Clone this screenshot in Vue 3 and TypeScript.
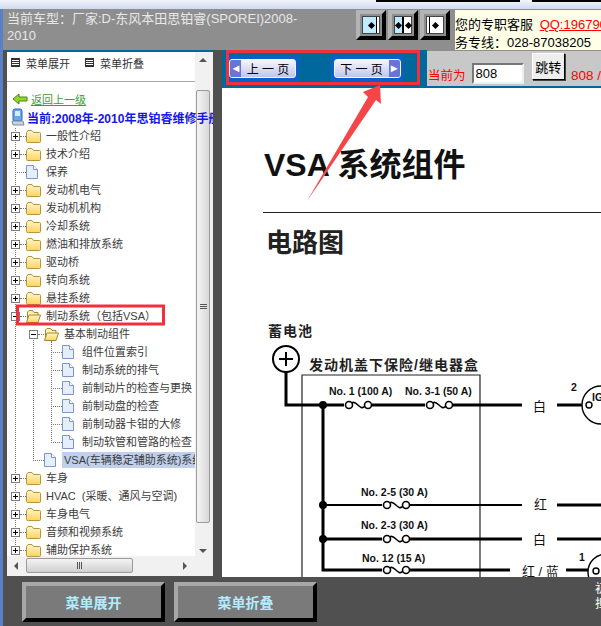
<template>
  <div class="app">
    <div class="titlebar">
      <span class="tb-line tb1"></span>
      <span class="tb-line tb2"></span>
    </div>
    <div class="main">
      <div class="header">
        <div class="car">当前车型：厂家:D-东风本田思铂睿(SPOREI)2008-<br />2010</div>
        <div class="split-btns">
          <button class="bevel"><span class="ico left-open"><i class="dia"></i></span></button>
          <button class="bevel"><span class="ico both"><i class="dia"></i><i class="dia"></i></span></button>
          <button class="bevel"><span class="ico right-open"><i class="dia"></i></span></button>
        </div>
        <div class="service">
          <div>您的专职客服 <a class="qq">QQ:196790</a></div>
          <div>务专线：028-87038205</div>
        </div>
      </div>

      <div class="body">
        <aside class="side">
          <div class="side-inner">
            <div class="tree-scroll">
              <div class="side-tools">
                <span class="tool"><i class="doc-ico"></i>菜单展开</span>
                <span class="tool"><i class="doc-ico"></i>菜单折叠</span>
              </div>
              <a class="back">
                <svg width="16" height="12" viewBox="0 0 16 12"><path d="M1 6 7 1v3h8v4H7v3z" fill="#9ad42a" stroke="#3f8a10"/></svg>
                <span>返回上一级</span>
              </a>
              <div class="current">
                <svg width="14" height="18" viewBox="0 0 14 18"><rect x="2" y="1" width="9" height="12" rx="2" fill="#6aa8ee" stroke="#2d62b8"/><rect x="4" y="3" width="5" height="5" fill="#d8ecff"/><path d="M1 13h11l1 4H2z" fill="#c8d4e4" stroke="#7b8aa0"/></svg>
                <span>当前:2008年-2010年思铂睿维修手册</span>
              </div>
              <div class="tree">
                <span v-for="g in guides" :key="g.left" class="guide" :style="{ left: g.left + 'px', top: g.top + 'px', height: g.height + 'px' }"></span>
                <div v-for="row in rows" :key="row.text" class="row" :style="{ paddingLeft: row.level * 18 + 6 + 'px' }">
                  <span class="toggle" :class="{ none: row.kind === 'leaf' }">
                    <template v-if="row.kind !== 'leaf'">
                      <i class="h"></i><i v-if="row.kind === 'closed'" class="v"></i>
                    </template>
                  </span>
                  <span class="dash"></span>
                  <svg v-if="row.kind === 'closed'" class="folder" width="15" height="14" viewBox="0 0 15 14">
                    <path d="M.5 3.5 2 1.5h4L7.5 3.5h6a1 1 0 0 1 1 1v8a1 1 0 0 1-1 1h-12a1 1 0 0 1-1-1z" fill="url(#fold)" stroke="#b8953a"/>
                  </svg>
                  <svg v-else-if="row.kind === 'open'" class="folder" width="15" height="14" viewBox="0 0 15 14">
                    <path d="M1.5 12V3L3 1.5h3.5L8 3.5h4V6" fill="#fff2b8" stroke="#a8852e"/>
                    <path d="M.5 13.5 3 6h11.5L12 13.5z" fill="url(#fold)" stroke="#a8852e"/>
                  </svg>
                  <svg v-else class="page" width="12" height="14" viewBox="0 0 12 14">
                    <path d="M.5.5h7l4 4v9H.5z" fill="#e4eefc" stroke="#7d96c8"/>
                    <path d="M7.5.5v4h4" fill="#fff" stroke="#7d96c8"/>
                  </svg>
                  <span class="label" :class="{ selected: row.selected }">{{ row.text }}</span>
                </div>
              </div>
              <svg width="0" height="0" class="defs">
                <linearGradient id="fold" x1="0" y1="0" x2="0" y2="1">
                  <stop offset="0" stop-color="#fff6cc" />
                  <stop offset="1" stop-color="#ffd55c" />
                </linearGradient>
              </svg>
            </div>
            <div class="vbar">
              <span class="arrow-up"></span>
              <span class="thumb"><i></i><i></i><i></i></span>
              <span class="arrow-down"></span>
            </div>
          </div>
          <div class="hbar">
            <span class="arrow-left"></span>
            <span class="hthumb"><i></i><i></i><i></i></span>
            <span class="arrow-right"></span>
          </div>
        </aside>

        <section class="content">
          <div class="pager">
            <div class="pager-nav">
              <div class="pg-box">
                <span class="pg prev"><b>◂</b><em>上 一 页</em></span>
              </div>
              <div class="pg-box next-box">
                <span class="pg next"><em>下 一 页</em><b>▸</b></span>
              </div>
            </div>
            <div class="jump">
              <span class="now">当前为</span>
              <input class="page-input" value="808" />
              <button class="go">跳转</button>
              <span class="total">808 /</span>
            </div>
          </div>
          <div class="doc">
            <h1>VSA 系统组件</h1>
            <hr />
            <h2>电路图</h2>
            <svg class="diagram" width="379" height="256" viewBox="222 321 379 256">
              <text x="268" y="336" class="cn-b">蓄电池</text>
              <circle cx="286" cy="359" r="13" fill="#fff" stroke="#000" stroke-width="2" />
              <path d="M279 359h14M286 352v14" stroke="#000" stroke-width="2" />
              <text x="309" y="370" class="cn-b">发动机盖下保险/继电器盒</text>
              <path d="M302 577V375h178v202" fill="none" stroke="#222" stroke-width="1.2" />

              <path d="M286 372v33h236" fill="none" stroke="#000" stroke-width="3" />
              <path d="M323 405v165h187" fill="none" stroke="#000" stroke-width="3" />
              <path d="M323 505h199" stroke="#000" stroke-width="2" />
              <path d="M323 539h199" stroke="#000" stroke-width="3" />
              <path d="M557 405h44M557 505h44M557 539h44M566 570h35" stroke="#000" stroke-width="3" />

              <circle cx="323" cy="405" r="4" />
              <circle cx="323" cy="505" r="4" />
              <circle cx="323" cy="539" r="4" />

              <g v-for="f in fuses" :key="f.x + '-' + f.y" :transform="`translate(${f.x} ${f.y})`">
                <rect x="-1" y="-4" width="28" height="8" fill="#fff" />
                <circle cx="4" cy="0" r="3.5" fill="#fff" stroke="#000" stroke-width="1.6" />
                <circle cx="23" cy="0" r="3.5" fill="#fff" stroke="#000" stroke-width="1.6" />
                <path d="M7 -2C11 -6 15 7 20 1" fill="none" stroke="#000" stroke-width="1.6" />
              </g>

              <text x="329" y="395" class="lab">No. 1 (100 A)</text>
              <text x="405" y="395" class="lab">No. 3-1 (50 A)</text>
              <text x="361" y="496" class="lab">No. 2-5 (30 A)</text>
              <text x="361" y="529" class="lab">No. 2-3 (30 A)</text>
              <text x="362" y="562" class="lab">No. 12 (15 A)</text>

              <text x="533" y="411" class="wire">白</text>
              <text x="534" y="509" class="wire">红</text>
              <text x="533" y="544" class="wire">白</text>
              <text x="522" y="576" class="wire">红 / 蓝</text>

              <text x="571" y="391" class="lab">2</text>
              <text x="579" y="561" class="lab">1</text>
              <circle cx="601" cy="405" r="19" fill="#fff" stroke="#000" stroke-width="1.4" />
              <text x="592" y="401" class="lab">IG</text>
              <circle cx="589" cy="405" r="3" fill="#fff" stroke="#000" stroke-width="1.4" />
              <circle cx="606" cy="572" r="18" fill="#fff" stroke="#000" stroke-width="1.4" />
              <circle cx="596" cy="571" r="3" fill="#fff" stroke="#000" stroke-width="1.4" />
            </svg>
          </div>
        </section>
      </div>

      <div class="footer">
        <button class="foot-btn">菜单展开</button>
        <button class="foot-btn">菜单折叠</button>
        <div class="foot-note">初<br />担</div>
      </div>
    </div>

    <svg class="annot" width="601" height="626" viewBox="0 0 601 626">
      <rect x="227.5" y="51.5" width="191" height="32" fill="none" stroke="#f2303c" stroke-width="3" />
      <rect x="17.5" y="306" width="146" height="18" fill="none" stroke="#f2303c" stroke-width="3" />
      <path d="M380 85 363 92 368 97 307 201 376 100 381 104z" fill="#f64548" />
    </svg>
  </div>
</template>

<script setup lang="ts">
type Row = { text: string; level: number; kind: 'closed' | 'open' | 'leaf'; selected?: boolean }

const rows: Row[] = [
  { text: '一般性介绍', level: 0, kind: 'closed' },
  { text: '技术介绍', level: 0, kind: 'closed' },
  { text: '保养', level: 0, kind: 'leaf' },
  { text: '发动机电气', level: 0, kind: 'closed' },
  { text: '发动机机构', level: 0, kind: 'closed' },
  { text: '冷却系统', level: 0, kind: 'closed' },
  { text: '燃油和排放系统', level: 0, kind: 'closed' },
  { text: '驱动桥', level: 0, kind: 'closed' },
  { text: '转向系统', level: 0, kind: 'closed' },
  { text: '悬挂系统', level: 0, kind: 'closed' },
  { text: '制动系统（包括VSA）', level: 0, kind: 'open' },
  { text: '基本制动组件', level: 1, kind: 'open' },
  { text: '组件位置索引', level: 2, kind: 'leaf' },
  { text: '制动系统的排气', level: 2, kind: 'leaf' },
  { text: '前制动片的检查与更换', level: 2, kind: 'leaf' },
  { text: '前制动盘的检查', level: 2, kind: 'leaf' },
  { text: '前制动器卡钳的大修', level: 2, kind: 'leaf' },
  { text: '制动软管和管路的检查', level: 2, kind: 'leaf' },
  { text: 'VSA(车辆稳定辅助系统)系统组件', level: 1, kind: 'leaf', selected: true },
  { text: '车身', level: 0, kind: 'closed' },
  { text: 'HVAC\u00a0\u00a0(采暖、通风与空调)', level: 0, kind: 'closed' },
  { text: '车身电气', level: 0, kind: 'closed' },
  { text: '音频和视频系统', level: 0, kind: 'closed' },
  { text: '辅助保护系统', level: 0, kind: 'closed' },
]

// 树的竖向虚线，top 相对 .tree
const guides = [
  { left: 10, top: 1, height: 423 },
  { left: 28, top: 208, height: 126 },
  { left: 46, top: 214, height: 102 },
]

const fuses = [
  { x: 345, y: 405 },
  { x: 426, y: 405 },
  { x: 383, y: 505 },
  { x: 383, y: 539 },
  { x: 383, y: 570 },
]
</script>

<style>
html,
body {
  margin: 0;
  background: #505050;
}
</style>

<style scoped>
.app {
  position: relative;
  width: 601px;
  height: 626px;
  overflow: hidden;
  display: flex;
  flex-direction: column;
  font-family: "Liberation Sans", "Noto Sans CJK SC", sans-serif;
  font-size: 12px;
  background: #505050;
}

.titlebar {
  position: relative;
  height: 9px;
  background: linear-gradient(#f2f5fb, #cfdaf0);
  flex: none;
}
.tb-line {
  position: absolute;
  top: 0;
  height: 2px;
  background: #000;
}
.tb1 {
  left: 376px;
  width: 144px;
}
.tb2 {
  left: 532px;
  width: 69px;
}

.main {
  flex: 1;
  min-height: 0;
  display: flex;
  flex-direction: column;
  border-left: 3px solid #5b7fc4;
}

.header {
  height: 41px;
  flex: none;
  display: flex;
  background: #8e8e8e;
  box-sizing: border-box;
  overflow: hidden;
}
.car {
  width: 304px;
  margin-left: 4px;
  padding-top: 1px;
  color: #e8e8e8;
  font-size: 13px;
  line-height: 17px;
  white-space: nowrap;
}
.split-btns {
  display: flex;
  gap: 2px;
  margin-left: 45px;
  padding-top: 1px;
}
.bevel {
  width: 30px;
  height: 30px;
  padding: 0;
  box-sizing: border-box;
  background: #8e8e8e;
  border: 4px solid;
  border-color: #b4b4b4 #000 #000 #b4b4b4;
  display: flex;
  align-items: center;
  justify-content: center;
}
.ico {
  display: flex;
  align-items: center;
  justify-content: center;
  gap: 5px;
  width: 18px;
  height: 18px;
  border: 1px solid #444;
  box-sizing: border-box;
}
.left-open {
  background: linear-gradient(90deg, #bfeaff 80%, #000 80%, #000 88%, #fff 88%);
}
.both {
  background: linear-gradient(90deg, #bfeaff 46%, #000 46%, #000 54%, #fff 54%);
}
.right-open {
  background: linear-gradient(90deg, #fff 12%, #000 12%, #000 20%, #fff 20%);
}
.dia {
  width: 5px;
  height: 5px;
  background: #000;
  transform: rotate(45deg);
  flex: none;
}
.service {
  flex: 1;
  margin-left: 5px;
  margin-top: 1px;
  padding-top: 6px;
  background: #ffffe8;
  font-size: 13px;
  line-height: 18px;
  color: #000;
  white-space: nowrap;
  overflow: hidden;
}
.qq {
  color: #f00;
  text-decoration: underline;
  margin-left: 3px;
}

.body {
  flex: 1;
  min-height: 0;
  display: flex;
}

.side {
  position: relative;
  width: 206px;
  margin-left: 4px;
  margin-right: 9px;
  margin-bottom: 1px;
  flex: none;
  display: flex;
  flex-direction: column;
  background: #f5f5f5;
  border-top: 2px solid #00689c;
  box-sizing: border-box;
}
.side-inner {
  flex: 1;
  min-height: 0;
  display: flex;
}
.tree-scroll {
  width: 188px;
  background: #fff;
  flex: none;
  position: relative;
  z-index: 1;
}
.defs {
  position: absolute;
}
.side-tools {
  height: 30px;
  padding-bottom: 8px;
  box-sizing: border-box;
  display: flex;
  gap: 11px;
  align-items: center;
  font-size: 11px;
  color: #333;
  border-bottom: 1px solid #a8a8a8;
}
.tool {
  display: flex;
  align-items: center;
  white-space: nowrap;
  padding-left: 4px;
}
.doc-ico {
  width: 7px;
  height: 7px;
  border: 1px solid #333;
  margin-right: 6px;
  background: repeating-linear-gradient(#333 0 1px, #fff 1px 2px);
}
.back {
  display: flex;
  align-items: center;
  height: 18px;
  margin-top: 8px;
  padding-left: 5px;
  gap: 3px;
  font-size: 11px;
  color: #3aa030;
  text-decoration: underline;
  white-space: nowrap;
}
.back svg,
.current svg {
  flex: none;
}
.current {
  display: flex;
  align-items: center;
  width: 202px;
  height: 18px;
  margin-left: 4px;
  gap: 2px;
  color: #1414ee;
  font-weight: bold;
  white-space: nowrap;
  overflow: hidden;
}
.tree {
  position: relative;
  width: 190px;
  margin-top: 1px;
  margin-left: -2px;
  font-size: 11px;
  overflow: hidden;
}
.guide {
  position: absolute;
  width: 0;
  border-left: 1px dotted #777;
}
.row {
  position: relative;
  height: 18px;
  display: flex;
  align-items: center;
  color: #3c3c3c;
  white-space: nowrap;
}
.toggle {
  position: relative;
  width: 9px;
  height: 9px;
  box-sizing: border-box;
  flex: none;
  border: 1px solid #7d7d7d;
  background: #fff;
  z-index: 1;
}
.toggle.none {
  border-color: transparent;
  background: none;
}
.toggle .h {
  position: absolute;
  left: 1px;
  right: 1px;
  top: 3px;
  height: 1px;
  background: #000;
}
.toggle .v {
  position: absolute;
  top: 1px;
  bottom: 1px;
  left: 3px;
  width: 1px;
  background: #000;
}
.dash {
  width: 6px;
  flex: none;
  border-top: 1px dotted #777;
}
.toggle.none + .dash {
  width: 11px;
  margin-left: -5px;
}
.folder {
  flex: none;
  margin-right: 5px;
}
.page {
  flex: none;
  margin-right: 8px;
}
.label {
  padding: 0 2px;
  margin-left: -2px;
  line-height: 16px;
}
.selected {
  background: #c0d0ec;
}

.vbar {
  width: 18px;
  flex: none;
  position: relative;
  background: #f1f1f1;
}
.arrow-up,
.arrow-down {
  position: absolute;
  left: 4px;
  width: 0;
  height: 0;
  border-left: 4px solid transparent;
  border-right: 4px solid transparent;
}
.arrow-up {
  top: 6px;
  border-bottom: 4px solid #555;
}
.arrow-down {
  bottom: 3px;
  border-top: 4px solid #555;
}
.thumb {
  position: absolute;
  top: 38px;
  left: 1px;
  width: 14px;
  height: 433px;
  box-sizing: border-box;
  border: 1px solid #9a9a9a;
  border-radius: 2px;
  background: linear-gradient(90deg, #f4f4f4, #d8d8d8);
  display: flex;
  flex-direction: column;
  justify-content: center;
  align-items: center;
  gap: 1px;
}
.thumb i {
  width: 7px;
  height: 1px;
  background: #555;
}
.hbar {
  position: relative;
  height: 20px;
  flex: none;
  background: #f1f1f1;
}
.hbar .arrow-left,
.hbar .arrow-right {
  position: absolute;
  top: 6px;
  width: 0;
  height: 0;
  border-top: 4px solid transparent;
  border-bottom: 4px solid transparent;
}
.arrow-left {
  left: 7px;
  border-right: 4px solid #555;
}
.arrow-right {
  left: 176px;
  border-left: 4px solid #555;
}
.hthumb {
  position: absolute;
  left: 19px;
  top: 2px;
  width: 107px;
  height: 15px;
  box-sizing: border-box;
  border: 1px solid #9a9a9a;
  border-radius: 2px;
  background: linear-gradient(#f4f4f4, #d0d0d0);
  display: flex;
  justify-content: center;
  align-items: center;
  gap: 1px;
}
.hthumb i {
  width: 1px;
  height: 7px;
  background: #555;
}

.content {
  flex: 1;
  min-width: 0;
  display: flex;
  flex-direction: column;
  background: #fff;
}
.pager {
  height: 38px;
  flex: none;
  display: flex;
  background: #00689c;
  box-sizing: border-box;
}
.pager-nav {
  width: 205px;
  flex: none;
  display: flex;
  align-items: center;
  padding: 0 0 1px 7px;
  box-sizing: border-box;
}
.pg-box {
  width: 70px;
  height: 26px;
  display: flex;
  align-items: center;
  background: #0a5fc8;
}
.next-box {
  width: 72px;
  margin-left: 32px;
  justify-content: center;
}
.pg {
  width: 67px;
  height: 19px;
  display: flex;
  align-items: center;
  justify-content: space-between;
  box-sizing: border-box;
  border: 1px solid #f4f4ff;
  border-radius: 3px;
  background: linear-gradient(#f6f6ff, #c0c4ee);
  color: #000;
  overflow: hidden;
}
.pg em {
  flex: 1;
  font-style: normal;
  text-align: center;
  font-size: 12px;
}
.pg b {
  width: 11px;
  height: 100%;
  background: #6a74d8;
  color: #fff;
  font-size: 12px;
  line-height: 17px;
  text-align: center;
}
.jump {
  flex: 1;
  position: relative;
  display: flex;
  align-items: flex-end;
  background: #c8c8c8;
  border-top: 1px solid #8e8e8e;
  border-bottom: 2px solid #00689c;
  box-sizing: border-box;
  padding-left: 1px;
  white-space: nowrap;
  overflow: hidden;
}
.now {
  color: #f00;
  font-size: 12.5px;
  line-height: 18px;
  margin-bottom: 1px;
}
.page-input {
  width: 52px;
  height: 21px;
  margin: 0 0 2px 6px;
  padding: 0 2px;
  box-sizing: border-box;
  border: 2px solid;
  border-color: #777 #eee #eee #777;
  background: #fff;
  font: 13px "Liberation Sans", sans-serif;
  color: #000;
}
.go {
  width: 38px;
  height: 27px;
  margin: 0 0 6px 8px;
  padding: 0;
  box-sizing: border-box;
  border: 1px solid #000;
  border-top-color: #fff;
  border-left-color: #fff;
  background: #eee;
  font: 13px "Liberation Sans", "Noto Sans CJK SC", sans-serif;
  box-shadow: 1px 1px 0 #444;
}
.total {
  color: #f00;
  font-size: 13.5px;
  line-height: 18px;
  margin-left: 6px;
  margin-bottom: 1px;
}
.doc {
  flex: 1;
  min-height: 0;
  overflow: hidden;
  display: flex;
  flex-direction: column;
  color: #000;
}
.doc h1 {
  margin: 59px 0 0 42px;
  font-size: 32px;
  line-height: 36px;
  font-weight: bold;
  color: #111;
  white-space: nowrap;
}
.doc hr {
  margin: 29px 0 0 41px;
  height: 1px;
  border: 0;
  background: #222;
  flex: none;
}
.doc h2 {
  margin: 14px 0 0 44px;
  font-size: 26px;
  line-height: 32px;
  font-weight: bold;
  color: #222;
}
.diagram {
  margin-top: 62px;
  flex: none;
  display: block;
}
.cn-b {
  font-size: 14px;
  font-weight: bold;
  letter-spacing: 1px;
  fill: #222;
}
.lab {
  font-size: 10.5px;
  font-weight: bold;
  fill: #111;
}
.wire {
  font-size: 13px;
  fill: #111;
}

.footer {
  position: relative;
  height: 49px;
  flex: none;
  display: flex;
  gap: 9px;
  padding: 5px 0 0 19px;
  box-sizing: border-box;
  background: #505050;
}
.foot-btn {
  width: 143px;
  height: 40px;
  padding: 0;
  box-sizing: border-box;
  border: 4px solid;
  border-color: #a8a8a8 #000 #000 #a8a8a8;
  background: #7a7a7a;
  color: #b4ecff;
  font: bold 14px "Liberation Sans", "Noto Sans CJK SC", sans-serif;
}
.foot-note {
  position: absolute;
  right: -6px;
  top: 5px;
  color: #fff;
  font-size: 12px;
  line-height: 15px;
}

.annot {
  position: absolute;
  inset: 0;
  pointer-events: none;
  z-index: 2;
}
</style>
